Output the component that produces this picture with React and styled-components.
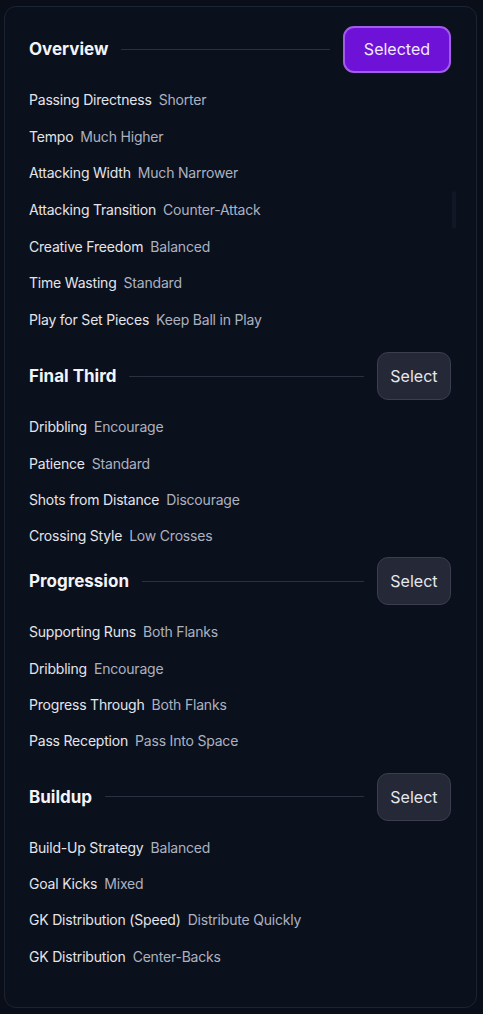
import React from "react";
import styled, { createGlobalStyle } from "styled-components";

const GlobalStyle = createGlobalStyle`
  html, body {
    margin: 0;
    padding: 0;
    background: #0a0e19;
  }
  body {
    font-family: Inter, "Noto Sans", sans-serif;
  }
`;

const Page = styled.div`
  padding: 6px 6px 6px 4px;
`;

const Card = styled.div`
  position: relative;
  box-sizing: border-box;
  height: 1002px;
  background: #0b101d;
  border: 1px solid #1d2431;
  border-radius: 12px;
  padding: 18px 25px 0 24px;
`;

const Thumb = styled.div`
  position: absolute;
  right: 20px;
  top: 184px;
  width: 4px;
  height: 38px;
  border-radius: 2px;
  background: #111726;
`;

const Section = styled.section`
  margin-top: ${(p) => p.$top || 0}px;
`;

const Header = styled.div`
  display: flex;
  align-items: center;
  gap: 13px;
  height: 48px;
  margin-bottom: 9px;
`;

const Title = styled.h3`
  margin: 0;
  font-size: 17px;
  font-weight: 700;
  color: #f3f4f7;
  white-space: nowrap;
`;

const Rule = styled.div`
  flex: 1;
  height: 1px;
  background: #2b3140;
`;

const Button = styled.button`
  box-sizing: border-box;
  height: ${(p) => (p.$selected ? 47 : 48)}px;
  padding: 0 ${(p) => (p.$selected ? 19 : 12.5)}px;
  border-radius: 11px;
  font-family: inherit;
  font-size: 16px;
  cursor: pointer;
  color: ${(p) => (p.$selected ? "#f1e9ff" : "#e6e7ec")};
  background: ${(p) => (p.$selected ? "#6d12d6" : "#252837")};
  border: ${(p) => (p.$selected ? "2px solid #a35bea" : "1px solid #3a3e4e")};
`;

const Row = styled.div`
  display: flex;
  align-items: center;
  gap: 7px;
  height: ${(p) => p.$h}px;
  padding-bottom: 1px;
  box-sizing: border-box;
  font-size: 14px;
  letter-spacing: -0.2px;
`;

const Label = styled.span`
  color: #e3e5ea;
`;

const Value = styled.span`
  color: #acb2c0;
`;

const sections = [
  {
    title: "Overview",
    selected: true,
    top: 0,
    rowHeight: 36.6,
    rows: [
      ["Passing Directness", "Shorter"],
      ["Tempo", "Much Higher"],
      ["Attacking Width", "Much Narrower"],
      ["Attacking Transition", "Counter-Attack"],
      ["Creative Freedom", "Balanced"],
      ["Time Wasting", "Standard"],
      ["Play for Set Pieces", "Keep Ball in Play"],
    ],
  },
  {
    title: "Final Third",
    top: 14,
    rowHeight: 36.3,
    rows: [
      ["Dribbling", "Encourage"],
      ["Patience", "Standard"],
      ["Shots from Distance", "Discourage"],
      ["Crossing Style", "Low Crosses"],
    ],
  },
  {
    title: "Progression",
    top: 3,
    rowHeight: 36.3,
    rows: [
      ["Supporting Runs", "Both Flanks"],
      ["Dribbling", "Encourage"],
      ["Progress Through", "Both Flanks"],
      ["Pass Reception", "Pass Into Space"],
    ],
  },
  {
    title: "Buildup",
    top: 13,
    rowHeight: 36.3,
    rows: [
      ["Build-Up Strategy", "Balanced"],
      ["Goal Kicks", "Mixed"],
      ["GK Distribution (Speed)", "Distribute Quickly"],
      ["GK Distribution", "Center-Backs"],
    ],
  },
];

export default function App() {
  return (
    <Page>
      <GlobalStyle />
      <Card>
        <Thumb />
        {sections.map((s) => (
          <Section key={s.title} $top={s.top}>
            <Header>
              <Title>{s.title}</Title>
              <Rule />
              <Button $selected={s.selected}>
                {s.selected ? "Selected" : "Select"}
              </Button>
            </Header>
            {s.rows.map(([label, value], i) => (
              <Row key={i} $h={s.rowHeight}>
                <Label>{label}</Label>
                <Value>{value}</Value>
              </Row>
            ))}
          </Section>
        ))}
      </Card>
    </Page>
  );
}
